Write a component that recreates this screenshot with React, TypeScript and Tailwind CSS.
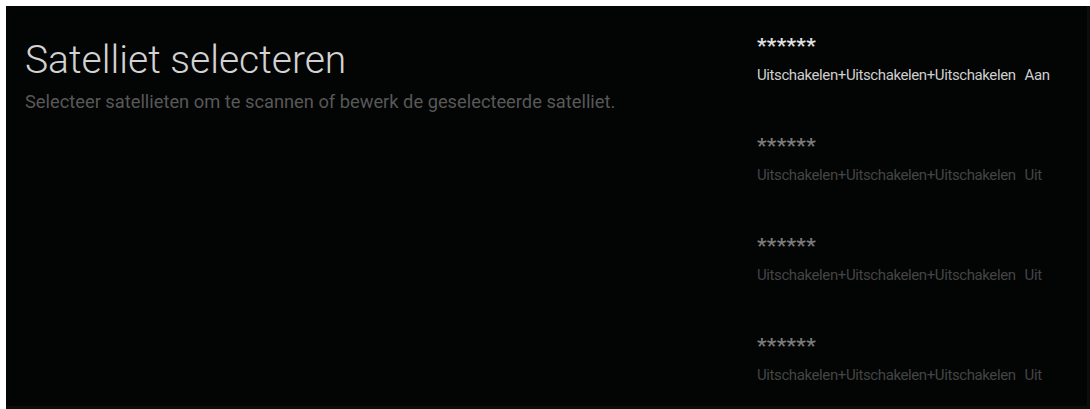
const items = [
  { naam: "******", status: "Aan", actief: true },
  { naam: "******", status: "Uit", actief: false },
  { naam: "******", status: "Uit", actief: false },
  { naam: "******", status: "Uit", actief: false },
];

export default function App() {
  return (
    <div className="w-[1090px] h-[409px] bg-white pt-[6px] pl-[6px] overflow-hidden font-['Roboto',sans-serif]">
      <div className="flex h-full bg-[#030404] border-r-[3px] border-b-[3px] border-[#0c0d0d]">
        {/* Links: titel en uitleg */}
        <div className="w-[751px] shrink-0 pl-[19px] pt-[31px]">
          <h1 className="text-[39px] leading-[46px] font-light text-[#d2d2d2]">Satelliet selecteren</h1>
          <p className="mt-[8px] text-[18.3px] leading-[22px] text-[#585858]">
            Selecteer satellieten om te scannen of bewerk de geselecteerde satelliet.
          </p>
        </div>

        {/* Rechts: lijst met satellieten */}
        <div className="flex flex-col pt-[30px]">
          {items.map((item, i) => (
            <div key={i} className="h-[100px] shrink-0">
              <p className={`text-[21px] leading-[20px] font-bold tracking-[0.3px] ${item.actief ? "text-[#e0e0e0]" : "text-[#7a7a7a]"}`}>
                {item.naam}
              </p>
              <p className={`mt-[10px] text-[15px] leading-[18px] tracking-[-0.4px] whitespace-nowrap ${item.actief ? "text-[#cfcfcf]" : "text-[#444444]"}`}>
                Uitschakelen+Uitschakelen+Uitschakelen<span className="ml-[9px]">{item.status}</span>
              </p>
            </div>
          ))}
        </div>
      </div>
    </div>
  );
}
